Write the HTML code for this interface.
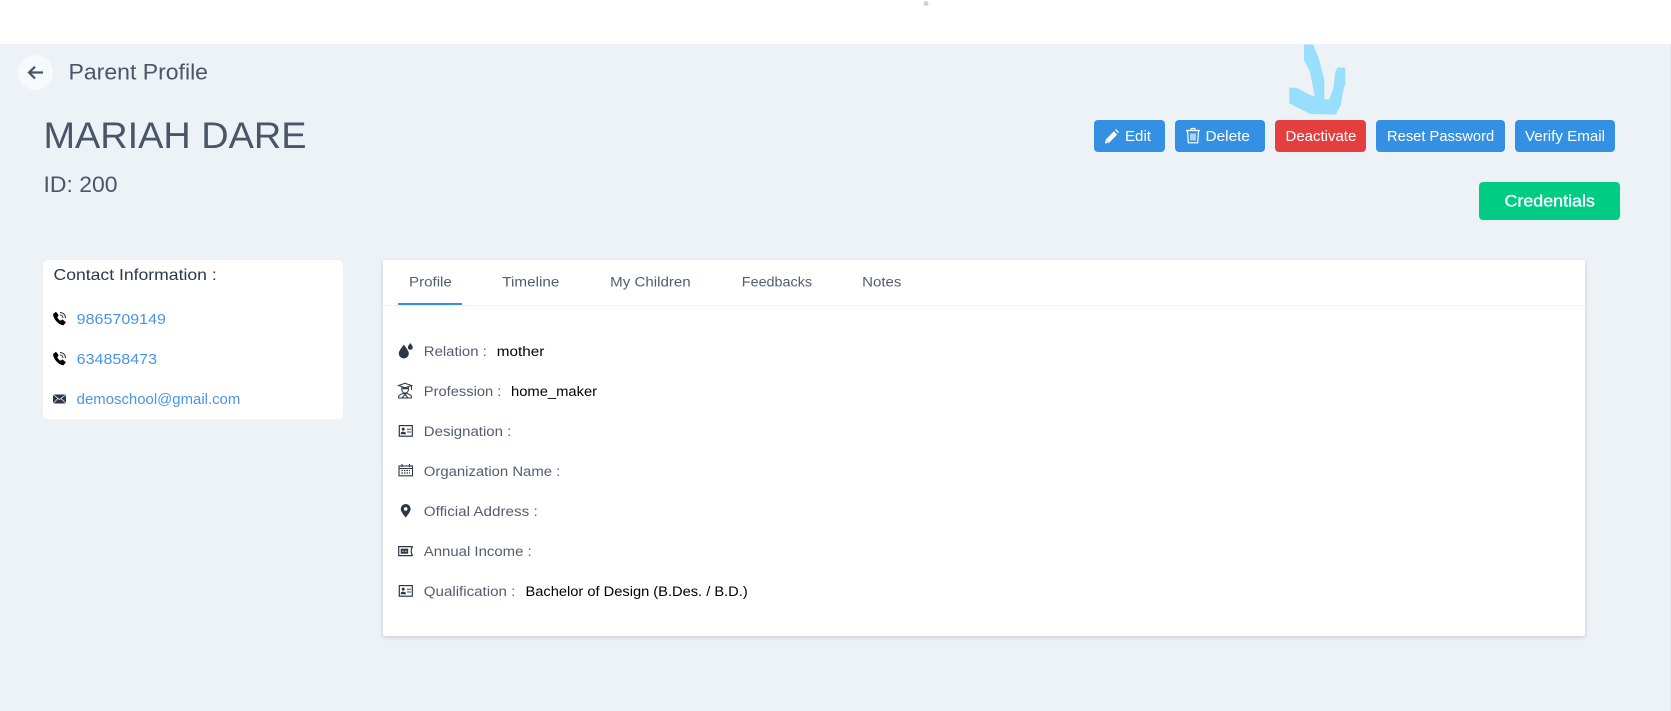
<!DOCTYPE html>
<html><head><meta charset="utf-8"><title>Parent Profile</title>
<style>
html,body{margin:0;padding:0;background:#edf2f7;width:1671px;height:711px;overflow:hidden}
svg{display:block}
text{font-family:"Liberation Sans",sans-serif}
</style></head><body>
<svg width="1671" height="711" viewBox="0 0 1671 711" xmlns="http://www.w3.org/2000/svg">
<defs>
<filter id="sh" x="-2%" y="-3%" width="104%" height="106%"><feDropShadow dx="0" dy="1.5" stdDeviation="2" flood-color="#000" flood-opacity=".16"/></filter>
<filter id="bl" x="-5%" y="-5%" width="110%" height="110%"><feGaussianBlur stdDeviation=".3"/></filter>
<g id="idc"><rect x=".6" y=".6" width="13" height="10.6" fill="none" stroke="#2d3748" stroke-width="1.2"/><circle cx="4.5" cy="4.1" r="1.5" fill="#2d3748"/><path d="M2 9.300h5.200V7.700L5.900 6.700H3.300L2 7.700z" fill="#2d3748"/><path d="M8.300 4.300h3.800M8.300 7h3.800" stroke="#2d3748" stroke-width="1"/></g>
<path id="ph" d="M.6 2.500 3.500.2l2.700 3.600-1.400 1.800c.6 1.500 1.900 2.900 3.400 3.600l1.700-1.300 3.500 2.900-2.300 2.900C6.500 13.600.6 7.700.6 2.500z" fill="#000"/>
</defs>
<rect width="1671" height="711" fill="#edf2f7"/>
<rect width="1671" height="44" fill="#fff"/>
<circle cx="926" cy="3.500" r="2.500" fill="#cfd2d6"/>
<rect x="1670" y="44" width="1" height="667" fill="#e2e6ea"/>

<!-- header -->
<circle cx="35.500" cy="72.500" r="17.500" fill="#f7fafc"/>
<path d="M43 72.500H29.500M35 66.700 29 72.500l6 6" fill="none" stroke="#4a5568" stroke-width="2.200"/>
<text x="68.500" y="79.300" font-size="22" fill="#4a5568" textLength="139.500" lengthAdjust="spacingAndGlyphs">Parent Profile</text>
<text x="43.500" y="148" font-size="37.500" fill="#4a5568" textLength="263" lengthAdjust="spacingAndGlyphs">MARIAH DARE</text>
<text x="43.500" y="192" font-size="22" fill="#4a5568" textLength="74" lengthAdjust="spacingAndGlyphs">ID: 200</text>

<!-- hand-drawn arrow -->
<g transform="translate(1260 30) scale(.3333)" fill="#97dffc" filter="url(#bl)">
<path d="M132 44H160L178 90 193 150V208H166L150 125 132 90z"/>
<path d="M88 173H110L150 195 190 208H208L220 175 226 125 233 113H256V162L250 180 242 225 228 254 150 252 115 234 88 220z"/>
</g>

<!-- buttons -->
<g>
<rect x="1094" y="120" width="71" height="32" rx="4" fill="#3490e3"/>
<rect x="1175" y="120" width="90" height="32" rx="4" fill="#3490e3"/>
<rect x="1275" y="120" width="91" height="32" rx="4" fill="#e53e3e"/>
<rect x="1376" y="120" width="129" height="32" rx="4" fill="#3490e3"/>
<rect x="1515" y="120" width="100" height="32" rx="4" fill="#3490e3"/>
<rect x="1479" y="182" width="141" height="38" rx="4" fill="#01cc84"/>
</g>
<path d="M1105 143.500l.8-4 8-8.200 3.300 3.300-8 8.100zM1106.800 141.700l1 1 .6-.6-1-1zM1115 130l1-1 3 3-1 1z" fill="#fff"/>
<g fill="none" stroke="#fff" stroke-width="1.200"><path d="M1186 130.500h14M1190.500 130.500l.8-2h3.400l.8 2M1187.500 131l.8 11.800h9.400l.8-11.800M1191 133.500v7M1193 133.500v7M1195 133.500v7"/></g>
<g fill="#fff" font-size="14.500">
<text x="1125" y="141" textLength="26" lengthAdjust="spacingAndGlyphs">Edit</text>
<text x="1205.500" y="141" textLength="44.500" lengthAdjust="spacingAndGlyphs">Delete</text>
<text x="1285.500" y="141" textLength="70.800" lengthAdjust="spacingAndGlyphs">Deactivate</text>
<text x="1387" y="141" textLength="107.200" lengthAdjust="spacingAndGlyphs">Reset Password</text>
<text x="1525" y="141" textLength="80" lengthAdjust="spacingAndGlyphs">Verify Email</text>
<text x="1504.500" y="206.500" font-size="17" stroke="#fff" stroke-width=".35" textLength="90.400" lengthAdjust="spacingAndGlyphs">Credentials</text>
</g>

<!-- contact card -->
<rect x="43" y="260" width="300" height="159" rx="5" fill="#fff"/>
<text x="53.500" y="280" font-size="16" fill="#2d3748" textLength="163.200" lengthAdjust="spacingAndGlyphs">Contact Information :</text>
<use href="#ph" x="52.500" y="311.500"/>
<path d="M60 312.500a5.500 5.500 0 0 1 5.500 5.500M60 315a3 3 0 0 1 3 3" fill="none" stroke="#333" stroke-width="1"/>
<use href="#ph" x="52.500" y="351.500"/>
<path d="M60 352.500a5.500 5.500 0 0 1 5.500 5.500M60 355a3 3 0 0 1 3 3" fill="none" stroke="#333" stroke-width="1"/>
<path d="M53 394.500h13v9H53z" fill="#2d3748"/>
<path d="M53 394.500l6.500 5 6.500-5M53 403.500l5-5M66 403.500l-5-5" fill="none" stroke="#fff" stroke-width=".7"/>
<g fill="#4a94e6" font-size="14.500">
<text x="76.700" y="324" textLength="89.300" lengthAdjust="spacingAndGlyphs">9865709149</text>
<text x="76.700" y="364" textLength="80.300" lengthAdjust="spacingAndGlyphs">634858473</text>
<text x="76.700" y="404" textLength="163.600" lengthAdjust="spacingAndGlyphs">demoschool@gmail.com</text>
</g>

<!-- main card -->
<rect x="383" y="260" width="1202" height="376" rx="2" fill="#fff" filter="url(#sh)"/>
<rect x="383" y="305" width="1202" height="1" fill="#edf2f7"/>
<rect x="398" y="303" width="64" height="2" fill="#3490e3"/>
<g fill="#525d6e" font-size="14.200">
<text x="409" y="286.500" textLength="42.800" lengthAdjust="spacingAndGlyphs">Profile</text>
<text x="502.300" y="286.500" textLength="57" lengthAdjust="spacingAndGlyphs">Timeline</text>
<text x="610.200" y="286.500" textLength="80.500" lengthAdjust="spacingAndGlyphs">My Children</text>
<text x="741.800" y="286.500" textLength="70.300" lengthAdjust="spacingAndGlyphs">Feedbacks</text>
<text x="862.100" y="286.500" textLength="39.300" lengthAdjust="spacingAndGlyphs">Notes</text>
<text x="423.800" y="356" textLength="63" lengthAdjust="spacingAndGlyphs">Relation :</text>
<text x="423.800" y="396" textLength="77.600" lengthAdjust="spacingAndGlyphs">Profession :</text>
<text x="423.800" y="436" textLength="87.500" lengthAdjust="spacingAndGlyphs">Designation :</text>
<text x="423.800" y="476" textLength="136.500" lengthAdjust="spacingAndGlyphs">Organization Name :</text>
<text x="423.800" y="516" textLength="113.900" lengthAdjust="spacingAndGlyphs">Official Address :</text>
<text x="423.800" y="556" textLength="107.900" lengthAdjust="spacingAndGlyphs">Annual Income :</text>
<text x="423.800" y="596" textLength="91.500" lengthAdjust="spacingAndGlyphs">Qualification :</text>
</g>
<g fill="#000" font-size="14.200">
<text x="496.800" y="356" textLength="47.500" lengthAdjust="spacingAndGlyphs">mother</text>
<text x="511" y="396" textLength="86.100" lengthAdjust="spacingAndGlyphs">home_maker</text>
<text x="525.500" y="596" textLength="222.200" lengthAdjust="spacingAndGlyphs">Bachelor of Design (B.Des. / B.D.)</text>
</g>

<!-- row icons -->
<path d="M403.800 344.500c2 3.300 5 6 5 9a5 5 0 0 1-10 0c0-3 3-5.700 5-9z" fill="#2d3748"/>
<path d="M410.300 343c1 1.600 2.500 3 2.500 4.400a2.500 2.500 0 0 1-5 0c0-1.400 1.500-2.800 2.500-4.400z" fill="#2d3748"/>
<g fill="none" stroke="#2d3748" stroke-width="1">
<path d="M398.500 385.500l6.500-2.200 6.500 2.200-6.500 2.200zM401.800 387v2.800a3.300 3.300 0 0 0 6.600 0V387M398.700 398v-2.300l3.300-2h6l3.300 2v2.300zM402 398l3-3.500 3 3.500M411.500 386v4"/>
<path d="M402 388.500h6" stroke-width="1.400"/>
</g>
<use href="#idc" x="398.700" y="425"/>
<g fill="none" stroke="#2d3748" stroke-width="1.100"><rect x="399" y="466" width="13.500" height="9.800"/><path d="M399 468.500h13.500M402 464v3M409.500 464v3"/></g>
<path d="M401.500 470.500h8.500M401.500 473h8.500" stroke="#2d3748" stroke-width="1.200" stroke-dasharray="1.500 1"/>
<path d="M405.700 504a4.900 4.900 0 0 0-4.900 4.900c0 3.300 4.900 8.600 4.900 8.600s4.900-5.300 4.900-8.600a4.900 4.900 0 0 0-4.900-4.900zm0 6.700a1.800 1.800 0 1 1 0-3.600 1.800 1.800 0 0 1 0 3.600z" fill="#2d3748"/>
<g fill="none" stroke="#2d3748" stroke-width="1.200"><path d="M412.700 546.600H398.700v9H412.700"/><path d="M412.700 546.800c-2 1.800-2 6.800 0 8.600"/></g>
<rect x="400.700" y="548.700" width="7.500" height="5" fill="#2d3748"/>
<path d="M402.200 551.200h1.700M405 551.200h1.700" stroke="#fff" stroke-width=".9"/>
<use href="#idc" x="398.700" y="585"/>
</svg>
</body></html>
